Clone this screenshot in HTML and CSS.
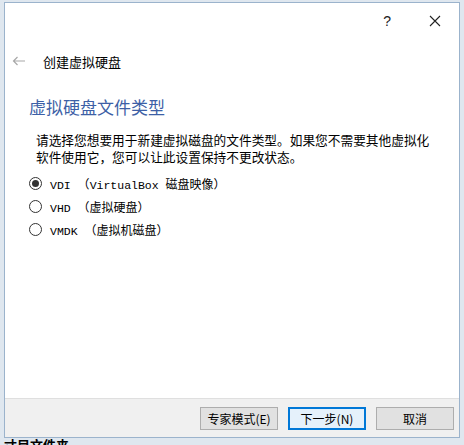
FILE: index.html
```html
<!DOCTYPE html>
<html>
<head>
<meta charset="utf-8">
<link rel="stylesheet" href="styles.css">
</head>
<body>
<div class="desk">
  <div class="win">
    <div class="titlebar">
      <span class="help">?</span>
      <svg class="close" width="12" height="12" viewBox="0 0 12 12"><path d="M1 1L11 11M11 1L1 11" stroke="#222" stroke-width="1.1" fill="none"/></svg>
    </div>
    <div class="nav">
      <svg class="back" width="14" height="10" viewBox="0 0 14 10"><path d="M13 5H1.5M5.5 1L1.5 5L5.5 9" stroke="#a8a8a8" stroke-width="1.2" fill="none"/></svg>
      <span class="navtitle">创建虚拟硬盘</span>
    </div>
    <div class="content">
      <h1 class="heading">虚拟硬盘文件类型</h1>
      <p class="desc">请选择您想要用于新建虚拟磁盘的文件类型。如果您不需要其他虚拟化<br>软件使用它，您可以让此设置保持不更改状态。</p>
      <div class="radios">
        <label class="radio"><span class="dot checked"></span><span class="lbl"><span class="lat">VDI </span>（<span class="lat">VirtualBox </span>磁盘映像）</span></label>
        <label class="radio"><span class="dot"></span><span class="lbl"><span class="lat">VHD </span>（虚拟硬盘）</span></label>
        <label class="radio"><span class="dot"></span><span class="lbl"><span class="lat">VMDK </span>（虚拟机磁盘）</span></label>
      </div>
    </div>
    <div class="footer">
      <button class="btn">专家模式(E)</button>
      <button class="btn focus">下一步(N)</button>
      <button class="btn">取消</button>
    </div>
  </div>
  <div class="behind">寸目文件夹</div>
</div>
</body>
</html>
```
FILE: styles.css
```css
html, body {
  margin: 0;
  padding: 0;
}
body {
  width: 464px;
  height: 445px;
  overflow: hidden;
  background: #dfe7ef;
  font-family: "Noto Sans CJK SC", sans-serif;
  color: #000;
}
.desk {
  padding: 2px 3px 0 4px;
  height: 445px;
  box-sizing: border-box;
}
.win {
  width: 456px;
  height: 436px;
  box-sizing: border-box;
  border: 1px solid #9bb3cc;
  background: #fff;
  display: flex;
  flex-direction: column;
}
.titlebar {
  height: 36px;
  display: flex;
  align-items: center;
  justify-content: flex-end;
  padding-right: 18px;
}
.help {
  font-family: "Liberation Sans", sans-serif;
  font-size: 14px;
  color: #222;
  margin-right: 38px;
}
.nav {
  height: 44px;
  display: flex;
  align-items: center;
  padding-left: 7px;
}
.back {
  margin-right: 17px;
}
.navtitle {
  font-size: 13px;
}
.content {
  flex: 1;
  padding: 0 0 0 24px;
}
.heading {
  margin: 12px 0 0 0;
  font-size: 17px;
  font-weight: normal;
  color: #3d5fa6;
  line-height: 24px;
}
.desc {
  margin: 12px 0 0 7px;
  font-size: 12.7px;
  line-height: 17px;
}
.radios {
  margin-top: 10px;
  display: flex;
  flex-direction: column;
  gap: 6px;
  padding-left: 0;
}
.radio {
  display: flex;
  align-items: center;
  height: 17px;
}
.dot {
  width: 11px;
  height: 11px;
  border: 1px solid #333;
  border-radius: 50%;
  box-sizing: content-box;
  margin-right: 8px;
  display: flex;
  align-items: center;
  justify-content: center;
}
.dot.checked::after {
  content: "";
  width: 7px;
  height: 7px;
  border-radius: 50%;
  background: #333;
}
.lbl {
  font-size: 12px;
}
.lat {
  font-family: "Liberation Mono", monospace;
  font-size: 11.5px;
  white-space: pre;
}
.footer {
  height: 38px;
  background: #f0f0f0;
  border-top: 1px solid #dfdfdf;
  display: flex;
  align-items: center;
  justify-content: flex-end;
  gap: 10px;
  padding-right: 5px;
}
.btn {
  width: 78px;
  height: 23px;
  box-sizing: border-box;
  border: 1px solid #adadad;
  background: #e1e1e1;
  font-family: "Noto Sans CJK SC", sans-serif;
  font-size: 12px;
  padding: 0;
  color: #000;
}
.btn.focus {
  border: 2px solid #0078d7;
  background: #e5f1fb;
}
.behind {
  font-size: 13px;
  font-weight: bold;
  line-height: 12px;
  margin-top: 1px;
  color: #000;
}
```
